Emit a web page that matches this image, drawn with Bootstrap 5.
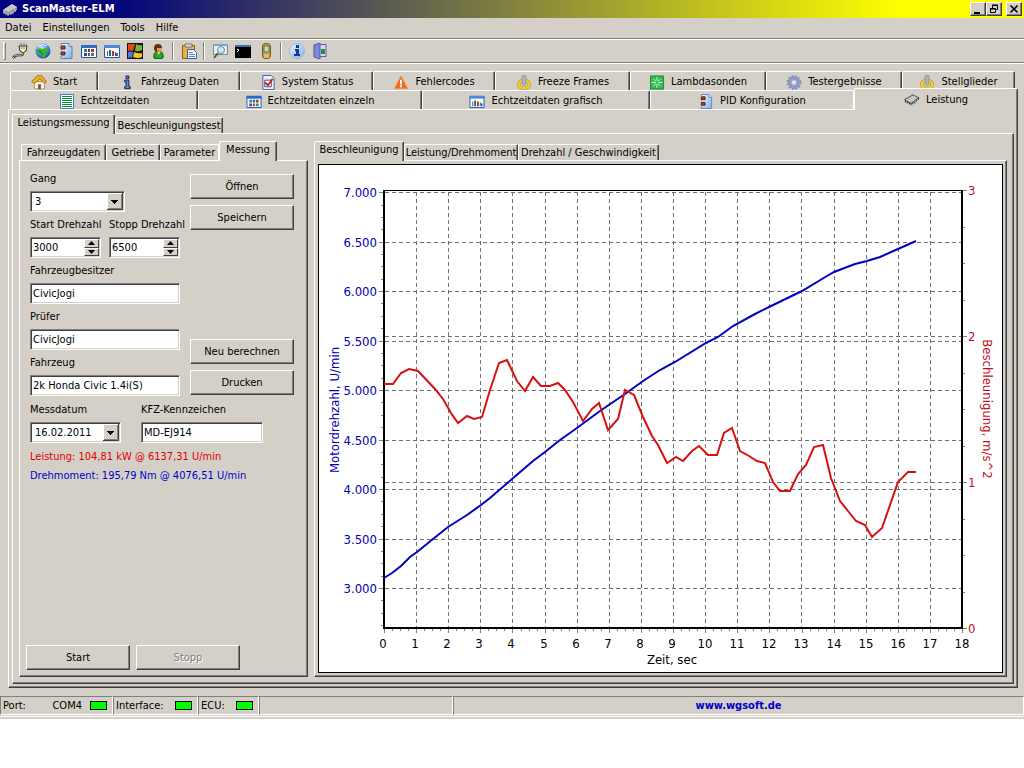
<!DOCTYPE html>
<html lang="de">
<head>
<meta charset="utf-8">
<meta name="viewport" content="width=device-width, initial-scale=1">
<title>ScanMaster-ELM</title>
<link rel="stylesheet" href="https://cdn.jsdelivr.net/npm/bootstrap@5.3.0/dist/css/bootstrap.min.css">
<style>
:root { --face:#d4d0c8; --dark:#404040; --shade:#808080; }
body { font:11px/14px "DejaVu Sans Condensed","DejaVu Sans",sans-serif; color:#000; background:#fff; }
button, input, select { font:inherit; color:#000; border-radius:0; }
button { padding:0; border:0; background:var(--face); }
svg { display:block; }
.ico { width:16px; height:16px; flex:none; }
.app-window { background:var(--face); padding-bottom:2px; }

.title-bar { height:18px; padding:0 2px; background:linear-gradient(90deg,#000080 0,#06067c 12%,#ff0 88%,#ff0 100%); color:#fff; font-weight:700; }
.title-bar h1 { font:inherit; margin:0; }
.win-btn { width:16px; height:14px; display:grid; place-items:center; border:1px solid; border-color:#fff var(--dark) var(--dark) #fff; box-shadow:inset -1px -1px var(--shade); }
.menu-row { height:20px; padding:0 5px; gap:11px; }
.tool-row { height:26px; padding:0 3px; border-top:1px solid var(--shade); border-bottom:1px solid #fff; box-shadow:inset 0 1px #fff, inset 0 -1px var(--shade); }
.tool-row button { width:23px; height:20px; display:grid; place-items:center; }
.tool-grip { width:3px; height:18px; margin-right:2px; border:1px solid; border-color:#fff var(--shade) var(--shade) #fff; }
.tool-sep { width:2px; height:18px; margin:0 3px; border-left:1px solid var(--shade); border-right:1px solid #fff; }

.page-tabs { padding:7px 6px 0 8px; }
.tabs { display:grid; }
.tabs > button { position:relative; display:flex; align-items:center; justify-content:center; gap:6px; white-space:nowrap; background:var(--face);
  border:solid; border-width:1px 1px 0; border-color:#fff var(--dark) #fff #fff; border-radius:2px 2px 0 0; box-shadow:inset -1px 0 var(--shade); }
.tabs .ico { height:15px; }
.tabs-top { grid-template-columns:88fr 142fr 133fr 122fr 135fr 136fr 136fr 113fr; height:19px; margin:0 3px 0 2px; }
.tabs-second { grid-template-columns:188fr 224fr 228fr 204fr 164fr; height:19px; margin-left:2px; }
.tabs-top > button, .tabs-second > button { padding-top:2px; }
.tabs > .chosen { z-index:1; margin-top:-2px; margin-bottom:-1px; padding:0 0 3px; }
.tabs-second > .chosen { padding:1px 0 0; }
.tabs > .before-chosen { border-right-color:#fff; box-shadow:none; }
.tabs-small { height:17px; padding-top:1px; }
.tabs-small > .chosen { margin-top:-3px; }
.tabs-test { grid-template-columns:103px 108px; }
.tabs-data { grid-template-columns:85px 54px 59px 58px; margin-left:2px; }
.tabs-chart { grid-template-columns:90px 114px 141px; }

.frame { border:1px solid; border-color:#fff var(--dark) var(--dark) #fff; box-shadow:inset -1px -1px var(--shade); }
.frame-page { padding:2px 3px 3px; }
.frame-test { padding:5px 6px 6px; }
.work-area { gap:6px; }
.data-pane { flex:0 0 289px; }
.data-body { padding:11px 6px 6px; }
.chart-body { padding:3px; }
.chart-box { background:#fff; border:1px solid #000; }

.form-part { padding:0 7px 0 4px; }
.fields { width:150px; gap:6px; }
.fields label, .date-row label { display:block; height:14px; margin-bottom:5px; white-space:nowrap; }
.date-row { margin:7px 0; }
.sunken { display:block; width:100%; height:21px; padding:0 2px; background:#fff; outline:0; border:1px solid; border-color:var(--shade) #fff #fff var(--shade); box-shadow:inset 1px 1px var(--dark), inset -1px -1px var(--face); }
select.sunken { appearance:none; padding:0 18px 0 4px; background:#fff url("data:image/svg+xml,%3Csvg xmlns='http://www.w3.org/2000/svg' width='16' height='17'%3E%3Cpath fill='%23d4d0c8' d='M0 0h16v17H0z'/%3E%3Cpath d='M.5 16V.5H15' stroke='%23fff' fill='none'/%3E%3Cpath d='M0 16.500h15.500V0' stroke='%23404040' fill='none'/%3E%3Cpath d='M1 15.500h13.500V1' stroke='%23808080' fill='none'/%3E%3Cpath d='M4 7h7v1h-1v1H9v1H8v1H7v-1H6V9H5V8H4z'/%3E%3C/svg%3E") right 1px center no-repeat; }
.gear-field { width:95px; }
.date-field { width:91px; }
.plate-field { width:122px; }
.spin { position:relative; width:71px; }
.spin-btns { position:absolute; right:2px; top:2px; bottom:2px; width:15px; }
.spin-btns button { flex:1; display:grid; place-items:center; border:1px solid; border-color:#fff var(--dark) var(--dark) #fff; }
.raised { width:104px; height:25px; border:1px solid; border-color:#fff var(--dark) var(--dark) #fff; box-shadow:inset -1px -1px var(--shade); }
.raised:disabled { color:var(--shade); text-shadow:1px 1px #fff; }
.side-btns { padding:2px 0 1px; }
.btn-col { gap:6px; }
.result-line { margin:0 0 5px; white-space:nowrap; }
.power-result { color:#e00000; }
.torque-result { color:#0000d0; }

.status-row { height:21px; margin-top:8px; padding-bottom:1px; border-bottom:1px solid #fff; }
.pane { padding:0 2px; white-space:nowrap; border:1px solid; border-color:var(--shade) #fff #fff var(--shade); }
.pane-port { width:113px; } .pane-if { width:85px; } .pane-ecu { width:61px; } .pane-empty { width:194px; }
.led { width:17px; height:9px; margin-right:3px; background:#0f0; border:1px solid #000; }
.status-row a { color:#0000c8; font-weight:700; text-decoration:none; }
.chart text { font-size:13px; }
</style>
</head>
<body>
<svg width="0" height="0" class="position-absolute" aria-hidden="true">
  <defs>
    <linearGradient id="gBlue" x1="0" y1="0" x2="1" y2="1"><stop offset="0" stop-color="#eef6ff"/><stop offset="1" stop-color="#7fb0e8"/></linearGradient>
    <radialGradient id="gGlobe" cx=".4" cy=".3" r=".8"><stop offset="0" stop-color="#d8ecff"/><stop offset=".5" stop-color="#4a8ee0"/><stop offset="1" stop-color="#0f3c9c"/></radialGradient>
  </defs>
  <symbol id="chip" viewBox="0 0 16 16"><path d="M0 7l9-5 6 3-8 7z" fill="#b8b8b8"/><path d="M0 7l9-5 6 3-8 6z" fill="#c8c8c8" stroke="#333" stroke-width=".8"/><path d="M1 8v2m2-1v2m2-1v2m2-1v2m2-3v2m2-3v2m2-4v2m2-4v2" stroke="#111"/><path d="M3 6l-1-1m4-.5l-1-1m4-1l-1-1" stroke="#555"/></symbol>
  <symbol id="chip-title" viewBox="0 0 16 16"><path d="M1 9l9-6 5 3v3l-8 5-6-3z" fill="#8c8c8c"/><path d="M1 9l9-6 5 3-8 5z" fill="#c8c8c8"/><path d="M2 10v3m2-2v3m2-2v3m3-4v3m2-4v3m2-5v3" stroke="#ddd"/></symbol>
  <symbol id="plug" viewBox="0 0 16 16"><path d="M9 3V0m3 3V0m2.500 3V1" stroke="#777"/><path d="M7 3h8l-1 5-3 2-3-2z" fill="#eee8b8" stroke="#333"/><path d="M9 5h4" fill="none" stroke="#a59a50"/><path d="M11 10c0 3-2 2-4 2s-4 0-6 3" fill="none" stroke="#222" stroke-width="2.400"/><path d="M11 10c0 3-2 2-4 2s-4 0-6 3" fill="none" stroke="#eee"/></symbol>
  <symbol id="globe" viewBox="0 0 16 16"><circle cx="8" cy="8" r="7.500" fill="url(#gGlobe)"/><path d="M1 7l4-2 2 1 4-1 3 2-2 2-2 5-2 1-2-4-3-1z" fill="#35b52c"/><path d="M3 8l3 1 2 3" stroke="#137a1c" fill="none"/><path d="M3 3q5-3 9 0" stroke="#e9f5ff" fill="none"/></symbol>
  <symbol id="doc" viewBox="0 0 16 16"><path d="M3 .5h8l3 3v12H3z" fill="url(#gBlue)" stroke="#5a86c4"/><path d="M11 .5v3h3" fill="#fff" stroke="#5a86c4"/><path d="M2 2h6v5H2zm0 6h6v5H2z" fill="#e8e0e0"/><path d="M3 3h4v3H3zm0 6h4v3H3z" fill="#b8402c" stroke="#402020"/></symbol>
  <symbol id="grid" viewBox="0 0 16 16"><path d="M.5 2.500h15v12H.5z" fill="#fff" stroke="#1c55b0"/><path d="M0 2h16v3H0z" fill="#2c6ccc"/><path d="M3 6h3v3H3zm7 4h3v3h-3z" fill="#3d8a58"/><path d="M7 6h2v3H7zm-4 4h3v3H3z" fill="#2848b0"/><path d="M10 6h3v3h-3zm-3 4h2v3H7z" fill="#b03828"/></symbol>
  <symbol id="bars" viewBox="0 0 16 16"><path d="M.5 2.500h15v12H.5z" fill="#fff" stroke="#1c55b0"/><path d="M0 2h16v3H0z" fill="#4a8adc"/><path d="M3 8h1v5H3zm8 1h1v4h-1z" fill="#555"/><path d="M5 7h2v6H5z" fill="#1c6a70"/><path d="M8 8h2v5H8z" fill="#c03030"/><path d="M12 10h2v3h-2z" fill="#306cb8"/></symbol>
  <symbol id="win" viewBox="0 0 16 16"><path fill="#151515" d="M0 0h16v16H0z"/><path fill="#e04a20" d="M1 1h7L6 8q-3-1-5 0z"/><path fill="#72b833" d="M9 1q3 2 6 1v5q-3 2-7 1z"/><path fill="#4a7fd8" d="M1 9q3-1 5 0l-1 6q-2-1-4 0z"/><path fill="#f5c622" d="M7 9q4 2 8 1v4q-4 2-9 0z"/></symbol>
  <symbol id="user" viewBox="0 0 16 16"><path d="M4 15q-1-5 3-7h3q4 2 3 7-4 2-9 0z" fill="#27a82d" stroke="#0b5514"/><path d="M7 9l2 3 1-3z" fill="#e8e060"/><circle cx="8" cy="5" r="4" fill="#6a2f12"/><path d="M7 5h5v3q-3 2-5 0z" fill="#e49a58"/></symbol>
  <symbol id="clip" viewBox="0 0 16 16"><path d="M1.500 2.500h12v13h-12z" fill="#e8b53c" stroke="#8a5f14"/><path d="M4 1h7v3H4z" fill="#ddd" stroke="#777"/><path d="M6.500 6.500h6l3 3v6h-9z" fill="#eef5ff" stroke="#3c62a8"/><path d="M8 9.500h4m-4 2h6m-6 2h6" stroke="#5b86cc"/></symbol>
  <symbol id="find" viewBox="0 0 16 16"><path d="M1.500 1.500h14v10h-14z" fill="#e8f0f4" stroke="#6d8a98"/><path d="M1 1h15v2H1z" fill="#7fa8c0"/><circle cx="9" cy="7" r="3.500" fill="#cfe8fa" stroke="#6d8a98"/><path d="M6 10l-4 5" stroke="#555" stroke-width="2"/></symbol>
  <symbol id="term" viewBox="0 0 16 16"><path fill="#000" d="M0 2h16v13H0z"/><path fill="#3c6cb0" d="M0 2h16v2H0z"/><path d="M2 6l2 1-2 2" stroke="#fff" fill="none"/></symbol>
  <symbol id="phone" viewBox="0 0 16 16"><rect x="4.500" y=".5" width="8" height="15" rx="3" fill="#c09a48" stroke="#7a5518"/><path d="M6 3h5v6H6z" fill="#bfe0b8" stroke="#5d7850"/><path d="M6 12h5m-5 2h5" stroke="#f0e2a0"/></symbol>
  <symbol id="info" viewBox="0 0 16 16"><circle cx="8" cy="8" r="7.500" fill="url(#gBlue)" stroke="#9bbbe4"/><path d="M7 2h3v3H7zm-1 4h4v5h1v2H5v-2h2V8H6z" fill="#123a98"/></symbol>
  <symbol id="exit" viewBox="0 0 16 16"><path d="M7 1.500h7v12H7z" fill="#d4daf0" stroke="#5a5ab0"/><path d="M2 2l6-2v16l-6-2z" fill="#8088dc" stroke="#4f55ac"/><path d="M9 6h4v5H9z" fill="#2e8a42"/></symbol>
  <symbol id="home" viewBox="0 0 16 16"><path d="M3 7h11v7l-5 2-6-2z" fill="#f6f0e0" stroke="#8a7040" stroke-width=".7"/><path d="M0 7l6-6 4-1 6 7-2 2-5-5-6 5z" fill="#eeb020" stroke="#8a5a08" stroke-width=".8"/><path d="M7 10h3v5H7z" fill="#7a5230"/></symbol>
  <symbol id="letter-i" viewBox="0 0 16 16"><path d="M7 1h3v3H7zM5.500 5.500h4.500v7h1.500v2h-6v-2h1.500v-5H5.500z" fill="#5f8ad0" stroke="#101c50"/></symbol>
  <symbol id="check" viewBox="0 0 16 16"><path d="M2.500.5h9l3 3v12h-12z" fill="#eaf2ff" stroke="#3c5ca4"/><path d="M4.500 5.500h7v7h-7z" fill="#fff" stroke="#446"/><path d="M5 8l3 3 5-7" fill="none" stroke="#d02020" stroke-width="2"/></symbol>
  <symbol id="warn" viewBox="0 0 16 16"><path d="M8 1l7 13.500H1z" fill="#f46a1c" stroke="#f08a4c" stroke-linejoin="round"/><path d="M7 5h2v5H7zm0 6h2v2H7z" fill="#fff"/></symbol>
  <symbol id="power" viewBox="0 0 16 16"><ellipse cx="8" cy="10" rx="5.500" ry="4" fill="none" stroke="#b8901c" stroke-width="3.800"/><ellipse cx="8" cy="10" rx="5.500" ry="4" fill="none" stroke="#f2cb38" stroke-width="2.800"/><rect x="6" y=".5" width="4" height="10" rx="1" fill="#b4b4c0" stroke="#9090a0"/></symbol>
  <symbol id="spark" viewBox="0 0 16 16"><path d="M1 1h14v14H1z" fill="#30b848" stroke="#1c8a30"/><path d="M8 2v12M2 8h12M4 4l8 8m0-8l-8 8" stroke="#d8ffe0"/><circle cx="8" cy="8" r="1.500" fill="#30b848"/></symbol>
  <symbol id="gear" viewBox="0 0 16 16"><circle cx="8" cy="8" r="6.800" fill="none" stroke="#7a86b4" stroke-width="2" stroke-dasharray="2 1.560"/><circle cx="8" cy="8" r="4.900" fill="none" stroke="#8c98c8" stroke-width="3.400"/><circle cx="8" cy="8" r="3" fill="#e0e0e4" stroke="#6a76a8" stroke-width=".6"/></symbol>
  <symbol id="lines" viewBox="0 0 16 15"><path d="M1.500 .5h13v14h-13z" fill="#fff" stroke="#3a7cc8"/><path d="M3 2.500h10M3 4.500h10M3 6.500h10M3 8.500h10M3 10.500h10M3 12.500h10" stroke="#0a8a2c"/></symbol>
  <symbol id="down" viewBox="0 0 7 4"><path d="M0 0h7L3.500 4z"/></symbol>
  <symbol id="up" viewBox="0 0 7 4"><path d="M0 4h7L3.500 0z"/></symbol>
</svg>

<div class="app-window">
  <header class="title-bar d-flex align-items-center">
    <svg class="ico me-1"><use href="#chip-title"/></svg>
    <h1 class="me-auto">ScanMaster-ELM</h1>
    <button class="win-btn" aria-label="Minimieren"><svg width="10" height="10"><path d="M1 8h6v2H1z"/></svg></button>
    <button class="win-btn" aria-label="Wiederherstellen"><svg width="10" height="10" fill="none" stroke="#000"><path d="M3.500 4V1.500h5v4H7M3 1h6M1.500 4.500h5v4h-5zM1 5h6"/></svg></button>
    <button class="win-btn ms-1" aria-label="Schließen"><svg width="10" height="10"><path d="M1.500 1.500l7 7m0-7l-7 7" stroke="#000" stroke-width="1.600"/></svg></button>
  </header>
  <nav class="menu-row d-flex align-items-center" aria-label="Menü">
    <button>Datei</button><button>Einstellungen</button><button>Tools</button><button>Hilfe</button>
  </nav>
  <div class="tool-row d-flex align-items-center" role="toolbar" aria-label="Werkzeuge">
    <span class="tool-grip"></span>
    <button aria-label="Verbinden"><svg class="ico"><use href="#plug"/></svg></button>
    <button aria-label="Internet"><svg class="ico"><use href="#globe"/></svg></button>
    <button aria-label="Optionen"><svg class="ico"><use href="#doc"/></svg></button>
    <button aria-label="Tabelle"><svg class="ico"><use href="#grid"/></svg></button>
    <button aria-label="Diagramm"><svg class="ico"><use href="#bars"/></svg></button>
    <button aria-label="Farben"><svg class="ico"><use href="#win"/></svg></button>
    <button aria-label="Benutzer"><svg class="ico"><use href="#user"/></svg></button>
    <span class="tool-sep"></span>
    <button aria-label="Protokoll"><svg class="ico"><use href="#clip"/></svg></button>
    <span class="tool-sep"></span>
    <button aria-label="Suchen"><svg class="ico"><use href="#find"/></svg></button>
    <button aria-label="Terminal"><svg class="ico"><use href="#term"/></svg></button>
    <button aria-label="Gerät"><svg class="ico"><use href="#phone"/></svg></button>
    <span class="tool-sep"></span>
    <button aria-label="Info"><svg class="ico"><use href="#info"/></svg></button>
    <button aria-label="Beenden"><svg class="ico"><use href="#exit"/></svg></button>
  </div>

  <main class="page-tabs">
    <div class="tabs tabs-top" role="tablist">
      <button role="tab"><svg class="ico"><use href="#home"/></svg>Start</button>
      <button role="tab"><svg class="ico"><use href="#letter-i"/></svg>Fahrzeug Daten</button>
      <button role="tab"><svg class="ico"><use href="#check"/></svg>System Status</button>
      <button role="tab"><svg class="ico"><use href="#warn"/></svg>Fehlercodes</button>
      <button role="tab"><svg class="ico"><use href="#power"/></svg>Freeze Frames</button>
      <button role="tab"><svg class="ico"><use href="#spark"/></svg>Lambdasonden</button>
      <button role="tab"><svg class="ico"><use href="#gear"/></svg>Testergebnisse</button>
      <button role="tab"><svg class="ico"><use href="#power"/></svg>Stellglieder</button>
    </div>
    <div class="tabs tabs-second" role="tablist">
      <button role="tab"><svg class="ico"><use href="#lines"/></svg>Echtzeitdaten</button>
      <button role="tab"><svg class="ico"><use href="#grid"/></svg>Echtzeitdaten einzeln</button>
      <button role="tab"><svg class="ico"><use href="#bars"/></svg>Echtzeitdaten grafisch</button>
      <button role="tab" class="before-chosen"><svg class="ico"><use href="#doc"/></svg>PID Konfiguration</button>
      <button role="tab" class="chosen" aria-selected="true"><svg class="ico"><use href="#chip"/></svg>Leistung</button>
    </div>

    <div class="frame frame-page">
      <div class="pt-1">
        <div class="tabs tabs-small tabs-test" role="tablist">
          <button role="tab" class="chosen" aria-selected="true">Leistungsmessung</button>
          <button role="tab">Beschleunigungstest</button>
        </div>
      </div>
      <div class="frame frame-test">
        <div class="work-area d-flex">
          <section class="data-pane d-flex flex-column">
            <div class="pt-1">
              <div class="tabs tabs-small tabs-data" role="tablist">
                <button role="tab">Fahrzeugdaten</button>
                <button role="tab">Getriebe</button>
                <button role="tab" class="before-chosen">Parameter</button>
                <button role="tab" class="chosen" aria-selected="true">Messung</button>
              </div>
            </div>
            <form class="frame data-body flex-grow-1 d-flex flex-column">
              <div class="form-part d-flex justify-content-between">
                <div class="fields d-flex flex-column">
                  <div><label for="gang">Gang</label><select id="gang" class="sunken gear-field"><option>3</option></select></div>
                  <div class="d-flex justify-content-between">
                    <div><label for="n1">Start Drehzahl</label>
                      <div class="spin"><input id="n1" class="sunken" inputmode="numeric" value="3000">
                        <span class="spin-btns d-flex flex-column"><button type="button" aria-label="Start erhöhen"><svg width="7" height="4"><use href="#up"/></svg></button><button type="button" aria-label="Start verringern"><svg width="7" height="4"><use href="#down"/></svg></button></span></div></div>
                    <div class="spin"><label for="n2">Stopp Drehzahl</label>
                      <div class="spin"><input id="n2" class="sunken" inputmode="numeric" value="6500">
                        <span class="spin-btns d-flex flex-column"><button type="button" aria-label="Stopp erhöhen"><svg width="7" height="4"><use href="#up"/></svg></button><button type="button" aria-label="Stopp verringern"><svg width="7" height="4"><use href="#down"/></svg></button></span></div></div>
                  </div>
                  <div><label for="owner">Fahrzeugbesitzer</label><input id="owner" class="sunken" value="CivicJogi"></div>
                  <div><label for="tester">Prüfer</label><input id="tester" class="sunken" value="CivicJogi"></div>
                  <div><label for="car">Fahrzeug</label><input id="car" class="sunken" value="2k Honda Civic 1.4i(S)"></div>
                </div>
                <div class="side-btns d-flex flex-column justify-content-between">
                  <div class="btn-col d-flex flex-column"><button type="button" class="raised">Öffnen</button><button type="button" class="raised">Speichern</button></div>
                  <div class="btn-col d-flex flex-column"><button type="button" class="raised">Neu berechnen</button><button type="button" class="raised">Drucken</button></div>
                </div>
              </div>
              <div class="date-row form-part d-flex">
                <div class="date-field me-3"><label for="date">Messdatum</label><select id="date" class="sunken"><option>16.02.2011</option></select></div>
                <div class="plate-field ms-1"><label for="plate">KFZ-Kennzeichen</label><input id="plate" class="sunken" value="MD-EJ914"></div>
              </div>
              <div class="form-part">
                <p class="result-line power-result">Leistung: 104,81 kW @ 6137,31 U/min</p>
                <p class="result-line torque-result">Drehmoment: 195,79 Nm @ 4076,51 U/min</p>
              </div>
              <div class="btn-col d-flex mt-auto">
                <button type="button" class="raised">Start</button><button type="button" class="raised" disabled>Stopp</button>
              </div>
            </form>
          </section>

          <section class="flex-grow-1 d-flex flex-column">
            <div class="pt-1">
              <div class="tabs tabs-small tabs-chart" role="tablist">
                <button role="tab" class="chosen" aria-selected="true">Beschleunigung</button>
                <button role="tab">Leistung/Drehmoment</button>
                <button role="tab">Drehzahl / Geschwindigkeit</button>
              </div>
            </div>
            <div class="frame chart-body">
              <div class="chart-box">
                <svg class="chart w-100" viewBox="319 165 683 507" role="img" aria-label="Motordrehzahl und Beschleunigung über der Zeit">
                  <g fill="none" stroke="#707070" stroke-dasharray="4 3" shape-rendering="crispEdges">
                    <path d="M416.500 192V627M448.500 192V627M480.500 192V627M512.500 192V627M545.500 192V627M577.500 192V627M609.500 192V627M641.500 192V627M673.500 192V627M705.500 192V627M737.500 192V627M769.500 192V627M801.500 192V627M834.500 192V627M866.500 192V627M898.500 192V627M930.500 192V627"/>
                    <path d="M385 192.500H961M385 242.500H961M385 291.500H961M385 336.500H961M385 341.500H961M385 390.500H961M385 440.500H961M385 482.500H961M385 489.500H961M385 539.500H961M385 588.500H961"/>
                  </g>
                  <g id="ticks" fill="none" stroke="#808080" shape-rendering="crispEdges"></g>
                  <g fill="none" stroke="#000" shape-rendering="crispEdges"><path d="M384 190.500H963"/><path d="M384 190V629M962 190V629M383 628H963" stroke-width="2"/></g>
                  <polyline fill="none" stroke="#0000c0" stroke-width="2" points="384,578 392,573 401,566 410,557 417,552 433,539 448,527 467,515 481,505 490,498 512,479 533,461 545,452 560,440 577,428 600,411 625,394 643,381 660,370 675,362 706,343 718,337 733,326 755,314 769,307 802,291 827,276 834,272 855,264 867,261 880,257 898,249 916,241"/>
                  <polyline fill="none" stroke="#d81010" stroke-width="2" points="384,384 393,384 401,373 409,369 418,371 435,389 443,399 451,413 458,423 467,416 474,419 482,417 490,390 499,363 507,360 517,381 525,391 533,377 541,386 550,386 558,383 565,390 573,402 583,421 592,409 599,403 608,430 618,419 625,390 634,395 643,417 652,436 658,445 667,463 676,457 683,461 692,451 699,446 708,455 717,455 724,433 732,428 740,451 749,456 757,461 765,463 773,482 780,491 790,491 798,474 806,465 814,447 823,445 831,478 840,501 848,511 856,521 865,525 872,537 882,528 898,482 908,472 916,472"/>
                  <g fill="#0000b0" text-anchor="end"><text x="377" y="197">7.000</text><text x="377" y="247">6.500</text><text x="377" y="296">6.000</text><text x="377" y="346">5.500</text><text x="377" y="395">5.000</text><text x="377" y="445">4.500</text><text x="377" y="494">4.000</text><text x="377" y="544">3.500</text><text x="377" y="593">3.000</text></g>
                  <g fill="#c01020"><text x="968" y="195">3</text><text x="968" y="341">2</text><text x="968" y="487">1</text><text x="968" y="633">0</text></g>
                  <g text-anchor="middle"><text x="383" y="648">0</text><text x="415" y="648">1</text><text x="447" y="648">2</text><text x="479" y="648">3</text><text x="511" y="648">4</text><text x="544" y="648">5</text><text x="576" y="648">6</text><text x="608" y="648">7</text><text x="640" y="648">8</text><text x="672" y="648">9</text><text x="705" y="648">10</text><text x="737" y="648">11</text><text x="769" y="648">12</text><text x="801" y="648">13</text><text x="834" y="648">14</text><text x="866" y="648">15</text><text x="898" y="648">16</text><text x="930" y="648">17</text><text x="962" y="648">18</text><text x="672" y="664">Zeit, sec</text></g>
                  <text transform="translate(339 410) rotate(-90)" text-anchor="middle" fill="#0000b0">Motordrehzahl, U/min</text>
                  <text transform="translate(983 409) rotate(90)" text-anchor="middle" fill="#c01020">Beschleunigung, m/s^2</text>
                </svg>
              </div>
            </div>
          </section>
        </div>
      </div>
    </div>
  </main>

  <footer class="status-row d-flex">
    <div class="pane pane-port d-flex align-items-center justify-content-between"><span>Port:</span><span class="ms-auto me-2">COM4</span><span class="led"></span></div>
    <div class="pane pane-if d-flex align-items-center justify-content-between"><span>Interface:</span><span class="led"></span></div>
    <div class="pane pane-ecu d-flex align-items-center justify-content-between"><span>ECU:</span><span class="led"></span></div>
    <div class="pane pane-empty"></div>
    <div class="pane flex-grow-1 d-flex align-items-center justify-content-center"><a href="http://www.wgsoft.de">www.wgsoft.de</a></div>
  </footer>
</div>
<script src="https://cdn.jsdelivr.net/npm/bootstrap@5.3.0/dist/js/bootstrap.bundle.min.js"></script>
<script>
// Axis ticks: four per second below, four per 500 rpm on the left, four per unit on the right.
let d = '';
for (let i = 0; i <= 72; i++) d += `M${Math.round(384 + i * 8.03)}.5 629v${i % 4 ? 2 : 4}`;
for (let i = -3; i <= 32; i++) d += `M383 ${Math.round(588 - i * 12.37)}.5h-${i % 4 ? 2 : 4}`;
for (let i = 0; i <= 12; i++) d += `M963 ${Math.round(628 - i * 36.5)}.5h${i % 4 ? 2 : 4}`;
document.getElementById('ticks').innerHTML = `<path d="${d}"/>`;
</script>
</body>
</html>
